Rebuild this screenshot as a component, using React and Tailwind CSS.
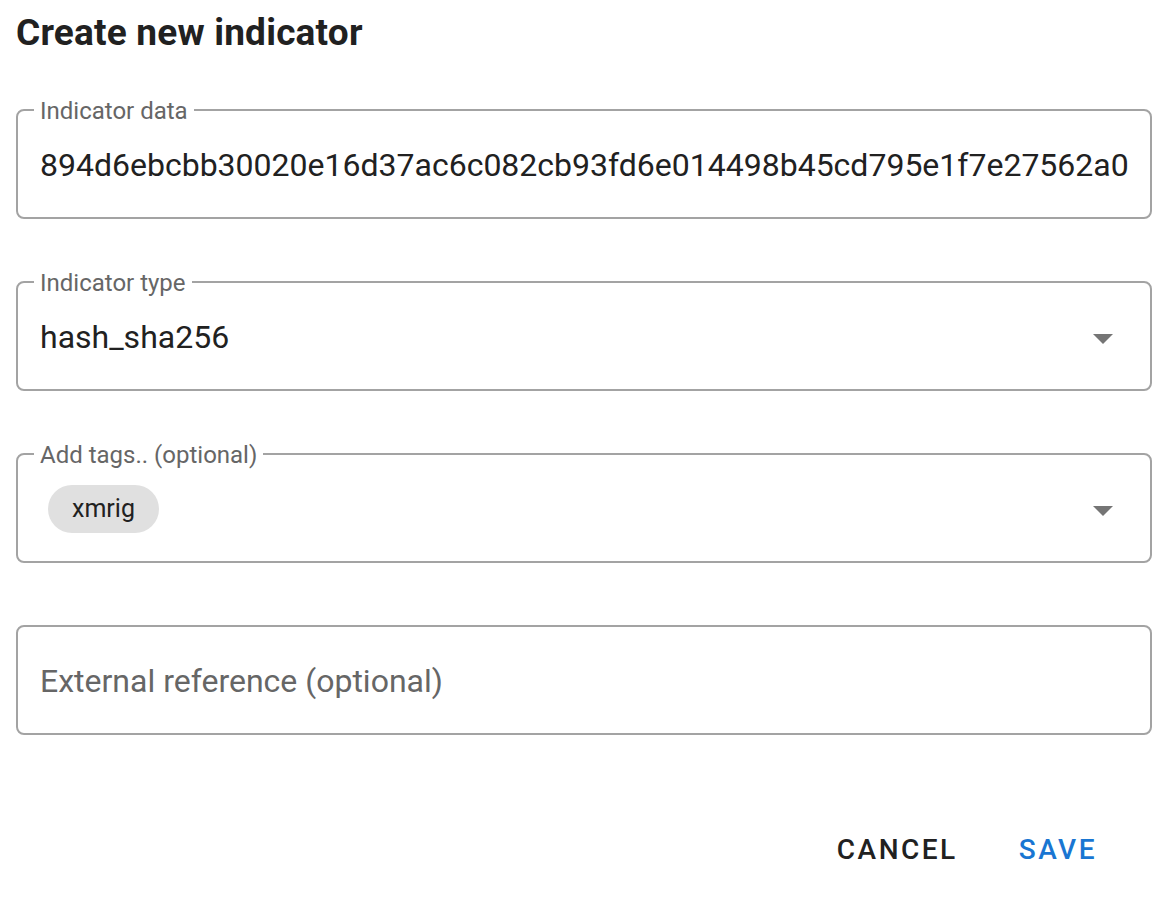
import React from 'react';

const ArrowDrop = () => (
  <svg width="48" height="48" viewBox="0 0 24 24" className="shrink-0 fill-[#757575] mt-[3px]">
    <path d="M7 10l5 5 5-5z" />
  </svg>
);

const Field = ({ label, children, select }) => (
  <div className="relative h-[110px] rounded-[8px] border-2 border-[#a3a3a3] flex items-center pl-[22px] pr-[23px]">
    {label && (
      <span className="absolute left-[16px] top-[-15px] bg-white px-[6px] text-[24px] leading-[30px] text-[#666666]">
        {label}
      </span>
    )}
    <div className="flex-1 min-w-0">{children}</div>
    {select && <ArrowDrop />}
  </div>
);

export default function App() {
  return (
    <div className="bg-white w-[1170px] h-[906px] px-[16px] font-['Roboto',sans-serif] text-[#212121]">
      <h2 className="pt-[11px] text-[37px] leading-[44px] font-bold tracking-[0.2px]">Create new indicator</h2>

      <div className="mt-[54px] w-[1136px] flex flex-col gap-[62px]">
        <Field label="Indicator data">
          <div className="text-[32px] leading-[40px] whitespace-nowrap pt-[1px]">
            894d6ebcbb30020e16d37ac6c082cb93fd6e014498b45cd795e1f7e27562a0
          </div>
        </Field>

        <Field label="Indicator type" select>
          <div className="text-[32px] leading-[40px] pt-[2px]">hash_sha256</div>
        </Field>

        <Field label="Add tags.. (optional)" select>
          <div className="flex ml-[8px] pt-[2px]">
            <span className="h-[48px] px-[24px] rounded-full bg-[#e0e0e0] text-[25px] flex items-center text-[#212121]">
              xmrig
            </span>
          </div>
        </Field>

        <Field>
          <div className="text-[32px] leading-[40px] text-[#666666] pt-[2px]">External reference (optional)</div>
        </Field>
      </div>

      <div className="flex justify-end items-center gap-[61px] mt-[94px] pr-[57px]">
        <button className="text-[28px] font-medium tracking-[2.5px] text-[#212121]">CANCEL</button>
        <button className="text-[28px] font-medium tracking-[2.5px] text-[#1976d2]">SAVE</button>
      </div>
    </div>
  );
}
